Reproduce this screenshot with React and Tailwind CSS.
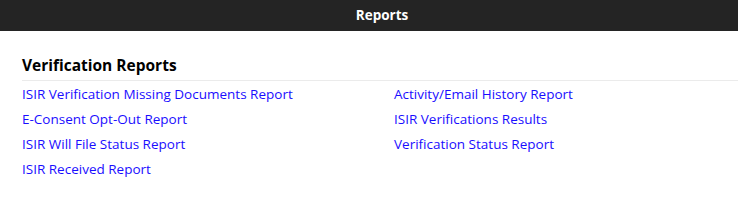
export default function App() {
  const left = [
    "ISIR Verification Missing Documents Report",
    "E-Consent Opt-Out Report",
    "ISIR Will File Status Report",
    "ISIR Received Report",
  ];
  const right = [
    "Activity/Email History Report",
    "ISIR Verifications Results",
    "Verification Status Report",
  ];

  return (
    <div className="min-h-[211px] bg-white font-['Open_Sans',sans-serif]">
      {/* top bar */}
      <div className="h-[31px] bg-[#242424] flex items-center justify-center">
        <span className="text-white font-bold text-[13.5px] pl-[26px]">Reports</span>
      </div>

      <div className="pl-[22px] pt-[24px]">
        <h2 className="text-[15.5px] font-bold text-black leading-[20px] pb-[5px] border-b border-[#ebebeb]">
          Verification Reports
        </h2>
        <div className="grid grid-cols-[372px_1fr] pt-[1px]">
          <ul className="flex flex-col">
            {left.map((t) => (
              <li key={t} className="h-[25px] flex items-center">
                <a href="#" className="text-[13.5px] text-[#1a0dff]">{t}</a>
              </li>
            ))}
          </ul>
          <ul className="flex flex-col">
            {right.map((t) => (
              <li key={t} className="h-[25px] flex items-center">
                <a href="#" className="text-[13.5px] text-[#1a0dff]">{t}</a>
              </li>
            ))}
          </ul>
        </div>
      </div>
    </div>
  );
}
